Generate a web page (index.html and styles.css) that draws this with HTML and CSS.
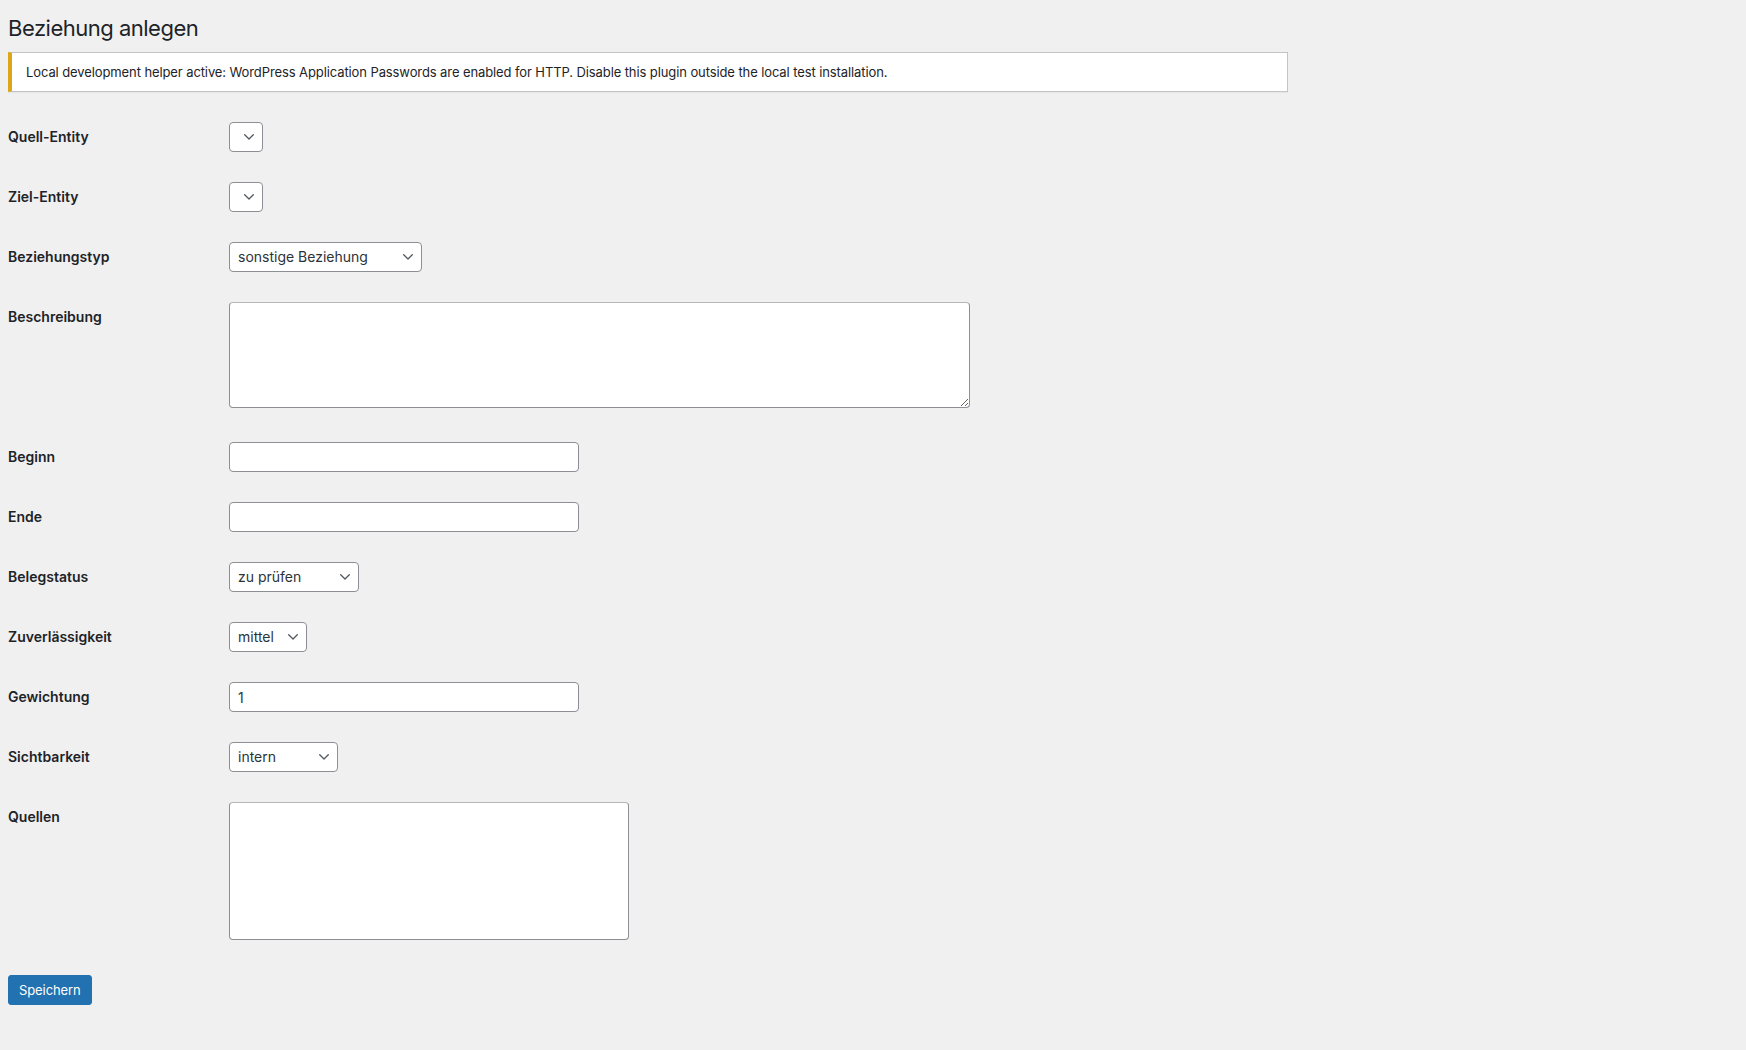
FILE: index.html
```html
<!DOCTYPE html>
<html lang="de">
<head>
  <meta charset="UTF-8" />
  <title>Beziehung anlegen</title>
  <link rel="stylesheet" href="styles.css">
</head>
<body>
  <div class="wrap">
    <h1>Beziehung anlegen</h1>

    <div class="notice notice-warning">
      <p>Local development helper active: WordPress Application Passwords are enabled for HTTP. Disable this plugin outside the local test installation.</p>
    </div>

    <form class="relation-form" method="post">
      <div class="field-row">
        <label class="field-label" for="source_entity">Quell-Entity</label>
        <div class="field-control">
          <span class="select-wrap w-empty">
            <select id="source_entity" name="source_entity"></select>
            <svg class="chevron" viewBox="0 0 10 6" width="10" height="6"><path d="M0.7 0.7 L5 5 L9.3 0.7" /></svg>
          </span>
        </div>
      </div>

      <div class="field-row">
        <label class="field-label" for="target_entity">Ziel-Entity</label>
        <div class="field-control">
          <span class="select-wrap w-empty">
            <select id="target_entity" name="target_entity"></select>
            <svg class="chevron" viewBox="0 0 10 6" width="10" height="6"><path d="M0.7 0.7 L5 5 L9.3 0.7" /></svg>
          </span>
        </div>
      </div>

      <div class="field-row">
        <label class="field-label" for="relation_type">Beziehungstyp</label>
        <div class="field-control">
          <span class="select-wrap w-type">
            <select id="relation_type" name="relation_type">
              <option selected>sonstige Beziehung</option>
              <option>Verwandtschaft</option>
              <option>Mitgliedschaft</option>
              <option>Geschäftsbeziehung</option>
            </select>
            <svg class="chevron" viewBox="0 0 10 6" width="10" height="6"><path d="M0.7 0.7 L5 5 L9.3 0.7" /></svg>
          </span>
        </div>
      </div>

      <div class="field-row tall">
        <label class="field-label" for="description">Beschreibung</label>
        <div class="field-control">
          <textarea id="description" name="description" class="text-large" rows="5"></textarea>
        </div>
      </div>

      <div class="field-row">
        <label class="field-label" for="start_date">Beginn</label>
        <div class="field-control">
          <input type="text" id="start_date" name="start_date" class="text-regular">
        </div>
      </div>

      <div class="field-row">
        <label class="field-label" for="end_date">Ende</label>
        <div class="field-control">
          <input type="text" id="end_date" name="end_date" class="text-regular">
        </div>
      </div>

      <div class="field-row">
        <label class="field-label" for="evidence_status">Belegstatus</label>
        <div class="field-control">
          <span class="select-wrap w-status">
            <select id="evidence_status" name="evidence_status">
              <option selected>zu prüfen</option>
              <option>belegt</option>
              <option>unbelegt</option>
            </select>
            <svg class="chevron" viewBox="0 0 10 6" width="10" height="6"><path d="M0.7 0.7 L5 5 L9.3 0.7" /></svg>
          </span>
        </div>
      </div>

      <div class="field-row">
        <label class="field-label" for="reliability">Zuverlässigkeit</label>
        <div class="field-control">
          <span class="select-wrap w-reliability">
            <select id="reliability" name="reliability">
              <option>hoch</option>
              <option selected>mittel</option>
              <option>niedrig</option>
            </select>
            <svg class="chevron" viewBox="0 0 10 6" width="10" height="6"><path d="M0.7 0.7 L5 5 L9.3 0.7" /></svg>
          </span>
        </div>
      </div>

      <div class="field-row">
        <label class="field-label" for="weight">Gewichtung</label>
        <div class="field-control">
          <input type="text" id="weight" name="weight" class="text-regular" value="1">
        </div>
      </div>

      <div class="field-row">
        <label class="field-label" for="visibility">Sichtbarkeit</label>
        <div class="field-control">
          <span class="select-wrap w-visibility">
            <select id="visibility" name="visibility">
              <option selected>intern</option>
              <option>öffentlich</option>
            </select>
            <svg class="chevron" viewBox="0 0 10 6" width="10" height="6"><path d="M0.7 0.7 L5 5 L9.3 0.7" /></svg>
          </span>
        </div>
      </div>

      <div class="field-row tall">
        <label class="field-label" for="sources">Quellen</label>
        <div class="field-control">
          <textarea id="sources" name="sources" class="text-sources" rows="6"></textarea>
        </div>
      </div>

      <p class="submit">
        <button type="submit" class="button-primary">Speichern</button>
      </p>
    </form>
  </div>
</body>
</html>
```

FILE: styles.css
```css
html,
body {
  margin: 0;
  background: #f0f0f1;
}

body {
  font-family: Inter, 'Liberation Sans', sans-serif;
  font-size: 13px;
  color: #1d2327;
}

.wrap {
  padding: 0 8px;
}

h1 {
  margin: 0;
  padding-top: 13px;
  font-size: 22px;
  font-weight: 400;
  line-height: 30px;
  letter-spacing: -0.5px;
  color: #1d2327;
}

/* admin notice */
.notice {
  box-sizing: border-box;
  width: 1280px;
  margin-top: 9px;
  padding: 1px 12px;
  background: #fff;
  border: 1px solid #c3c4c7;
  border-left: 4px solid #dba617;
  box-shadow: 0 1px 1px rgba(0, 0, 0, 0.04);
}

.notice p {
  margin: 0;
  padding: 2px;
  font-size: 13px;
  line-height: 32px;
  letter-spacing: -0.1px;
}

/* form rows */
.relation-form {
  margin-top: 15px;
}

.field-row {
  display: grid;
  grid-template-columns: 221px 1fr;
}

.field-label {
  padding-top: 21px;
  font-size: 14px;
  font-weight: 600;
  line-height: 18px;
}

.field-control {
  padding: 15px 0;
}

.field-row.tall .field-control {
  padding-bottom: 19px;
}

input,
select,
textarea,
button {
  font-family: inherit;
}

.text-regular {
  display: block;
  box-sizing: border-box;
  width: 350px;
  height: 30px;
  margin: 0;
  padding: 0 8px;
  font-size: 14px;
  color: #2c3338;
  background: #fff;
  border: 1px solid #8c8f94;
  border-radius: 4px;
}

textarea {
  display: block;
  box-sizing: border-box;
  margin: 0;
  padding: 2px 6px;
  font-size: 14px;
  line-height: 1.42857;
  color: #2c3338;
  background: #fff;
  border: 1px solid #8c8f94;
  border-top-color: #b4b6ba;
  border-radius: 4px;
}

.text-large {
  width: 741px;
  height: 106px;
}

.text-sources {
  width: 400px;
  height: 138px;
  resize: none;
}

/* selects with drawn chevron */
.select-wrap {
  position: relative;
  display: block;
  height: 30px;
}

.select-wrap select {
  -webkit-appearance: none;
  appearance: none;
  display: block;
  box-sizing: border-box;
  width: 100%;
  height: 30px;
  margin: 0;
  padding: 0 24px 0 8px;
  font-size: 14px;
  line-height: 28px;
  color: #2c3338;
  background: #fff;
  border: 1px solid #8c8f94;
  border-radius: 4px;
}

.select-wrap .chevron {
  position: absolute;
  right: 9px;
  top: 12px;
  pointer-events: none;
}

.chevron path {
  fill: none;
  stroke: #50575e;
  stroke-width: 1.3;
  stroke-linecap: round;
  stroke-linejoin: round;
}

.w-empty { width: 34px; }
.w-type { width: 193px; }
.w-status { width: 130px; }
.w-reliability { width: 78px; }
.w-visibility { width: 109px; }

/* submit */
.submit {
  margin: 16px 0 0;
  padding: 0;
}

.button-primary {
  height: 30px;
  padding: 0 10px;
  font-size: 13px;
  letter-spacing: -0.1px;
  color: #fff;
  background: #2271b1;
  border: 1px solid #2271b1;
  border-radius: 3px;
  cursor: pointer;
}
```
